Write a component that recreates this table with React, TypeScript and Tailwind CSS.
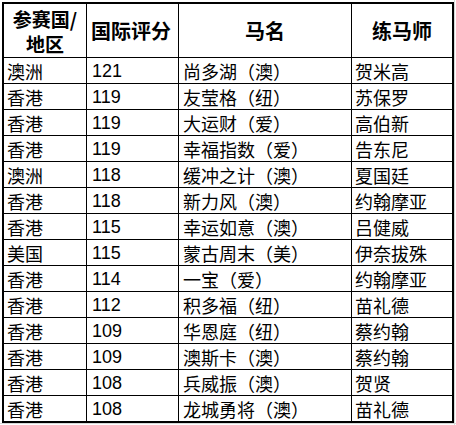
import React from "react";

const rows: [string, string, string, string][] = [
  ["澳洲", "121", "尚多湖（澳）", "贺米高"],
  ["香港", "119", "友莹格（纽）", "苏保罗"],
  ["香港", "119", "大运财（爱）", "高伯新"],
  ["香港", "119", "幸福指数（爱）", "告东尼"],
  ["澳洲", "118", "缓冲之计（澳）", "夏国廷"],
  ["香港", "118", "新力风（澳）", "约翰摩亚"],
  ["香港", "115", "幸运如意（澳）", "吕健威"],
  ["美国", "115", "蒙古周末（美）", "伊奈拔殊"],
  ["香港", "114", "一宝（爱）", "约翰摩亚"],
  ["香港", "112", "积多福（纽）", "苗礼德"],
  ["香港", "109", "华恩庭（纽）", "蔡约翰"],
  ["香港", "109", "澳斯卡（澳）", "蔡约翰"],
  ["香港", "108", "兵威振（澳）", "贺贤"],
  ["香港", "108", "龙城勇将（澳）", "苗礼德"],
];

const font = { fontFamily: '"Noto Sans CJK SC", sans-serif' };

export default function App() {
  return (
    <div className="relative w-[456px] h-[425px] bg-white overflow-hidden" style={font}>
      <div className="absolute left-[454px] top-0 h-[425px] w-px bg-[#d8d8d8]" />
      <div className="absolute top-[423px] left-0 w-[456px] h-px bg-[#d8d8d8]" />
      <div className="ml-[2px] mt-[2px] w-[452px] border-2 border-black text-black">
        <div className="grid grid-cols-[83px_92px_173px_100px] h-[54px] border-b border-black font-bold text-[20px]">
          <div className="border-r border-black flex flex-col items-center justify-center leading-[25px] text-[19px]">
            <span className="leading-[25px]">参赛国/</span>
            <span className="leading-[25px]">地区</span>
          </div>
          <div className="border-r border-black flex items-center pl-[4px]">国际评分</div>
          <div className="border-r border-black flex items-center justify-center">马名</div>
          <div className="flex items-center justify-center">练马师</div>
        </div>
        {rows.map((r, i) => (
          <div
            key={i}
            className={`grid grid-cols-[83px_92px_173px_100px] text-[18px] leading-none ${
              i === rows.length - 1 ? "h-[25px]" : "h-[26px] border-b border-black"
            }`}
          >
            <div className="border-r border-black flex items-center pl-[3px]">{r[0]}</div>
            <div
              className="border-r border-black flex items-center pl-[5px] text-[18px]"
              style={{ fontFamily: '"Liberation Sans", sans-serif' }}
            >
              {r[1]}
            </div>
            <div className="border-r border-black flex items-center pl-[4px]">{r[2]}</div>
            <div className="flex items-center pl-[3px]">{r[3]}</div>
          </div>
        ))}
      </div>
    </div>
  );
}
